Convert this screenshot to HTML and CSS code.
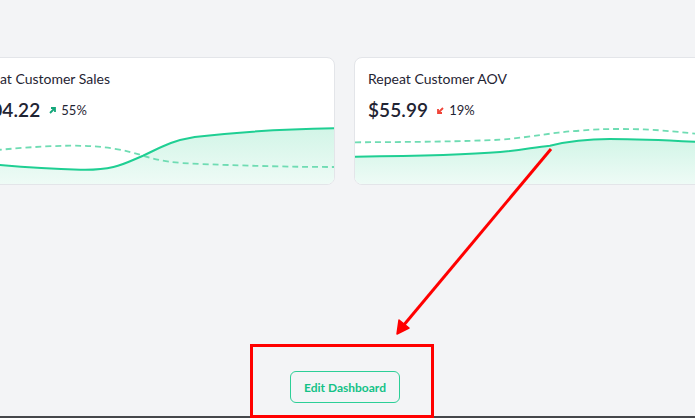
FILE: index.html
```html
<!DOCTYPE html>
<html>
<head>
<meta charset="utf-8">
<link rel="stylesheet" href="styles.css">
</head>
<body>
<div class="page">
  <div class="cards">
    <div class="card">
      <div class="card-head">
        <div class="title">Repeat Customer Sales</div>
        <div class="metric">
          <span class="value">$104.22</span>
          <svg class="trend" width="7" height="7" viewBox="0 0 7 7"><path d="M1 6 L5.5 1.5 M2 1 H6 V5" stroke="#14a77a" stroke-width="1.8" fill="none"/></svg>
          <span class="pct">55%</span>
        </div>
      </div>
      <svg class="chart" viewBox="0 0 380 58" preserveAspectRatio="none">
        <defs>
          <linearGradient id="g1" x1="0" y1="0" x2="0" y2="1">
            <stop offset="0" stop-color="#d2f5e7"/>
            <stop offset="1" stop-color="#eefbf6"/>
          </linearGradient>
        </defs>
        <path d="M0 35 C30 37 60 42 125 43.7 C160 44.5 170 37 188 29.7 C205 22 215 15 240 11 C290 5 340 3 380 2.3 L380 58 L0 58 Z" fill="url(#g1)"/>
        <path d="M0 28 C40 24 80 20 115 19.7 C150 19.5 170 24 188 29.7 C205 35 220 37 245 38 C300 40 340 41 380 41" fill="none" stroke="#6fdcb3" stroke-width="1.8" stroke-dasharray="6 4"/>
        <path d="M0 35 C30 37 60 42 125 43.7 C160 44.5 170 37 188 29.7 C205 22 215 15 240 11 C290 5 340 3 380 2.3" fill="none" stroke="#1fcf93" stroke-width="2"/>
      </svg>
    </div>
    <div class="card">
      <div class="card-head">
        <div class="title">Repeat Customer AOV</div>
        <div class="metric">
          <span class="value">$55.99</span>
          <svg class="trend" width="7" height="7" viewBox="0 0 7 7"><path d="M6 1 L1.5 5.5 M1 2 V6 H5" stroke="#f04438" stroke-width="1.8" fill="none"/></svg>
          <span class="pct">19%</span>
        </div>
      </div>
      <svg class="chart" viewBox="0 0 380 58" preserveAspectRatio="none">
        <defs>
          <linearGradient id="g2" x1="0" y1="0" x2="0" y2="1">
            <stop offset="0" stop-color="#d2f5e7"/>
            <stop offset="1" stop-color="#eefbf6"/>
          </linearGradient>
        </defs>
        <path d="M0 30.7 C60 30 110 29 146 26 C170 24 180 21 196 19.7 C215 15 230 13 256 13 C300 13 330 15 380 18 L380 58 L0 58 Z" fill="url(#g2)"/>
        <path d="M0 16.3 C60 16 110 15.5 146 13.7 C180 11 200 6 226 4.7 C245 3 255 3 266 3 C300 3 320 5 380 12" fill="none" stroke="#6fdcb3" stroke-width="1.8" stroke-dasharray="6 4"/>
        <path d="M0 30.7 C60 30 110 29 146 26 C170 24 180 21 196 19.7 C215 15 230 13 256 13 C300 13 330 15 380 18" fill="none" stroke="#1fcf93" stroke-width="2"/>
      </svg>
    </div>
  </div>
  <div class="actions">
    <button class="edit-btn">Edit Dashboard</button>
  </div>
</div>
<div class="bottom-line"></div>

<svg class="annot-arrow" width="695" height="418" viewBox="0 0 695 418">
  <line x1="551" y1="149" x2="403" y2="326" stroke="#ff0000" stroke-width="3"/>
  <path d="M397 334 L399 320 L409 328 Z" fill="#ff0000" stroke="#ff0000" stroke-width="1.5" stroke-linejoin="round"/>
</svg>
<div class="annot-box"></div>
</body>
</html>
```
FILE: styles.css
```css
html, body {
  margin: 0;
  padding: 0;
  background: #f3f4f6;
  overflow: hidden;
}
body {
  width: 695px;
  height: 418px;
  position: relative;
  font-family: "Lato", "Inter", sans-serif;
  color: #1f2937;
}
.page {
  height: 416px;
  display: flex;
  flex-direction: column;
  padding-top: 57px;
  box-sizing: border-box;
}
.cards {
  display: flex;
  gap: 19px;
  margin-left: -45px;
}
.card {
  flex: none;
  width: 380px;
  height: 128px;
  box-sizing: border-box;
  background: #fff;
  border: 1px solid #e3e5e9;
  border-radius: 8px;
  overflow: hidden;
  display: flex;
  flex-direction: column;
}
.card-head {
  padding: 12px 13px 0;
  flex: 1;
}
.title {
  font-size: 14px;
  line-height: 17px;
  color: #1f2433;
}
.metric {
  display: flex;
  align-items: center;
  margin-top: 11px;
  height: 23px;
}
.value {
  font-size: 19px;
  font-weight: 600;
  color: #1f2433;
  letter-spacing: 0.1px;
}
.trend {
  margin-left: 9px;
  margin-top: 1px;
}
.pct {
  margin-left: 5px;
  font-size: 13px;
  color: #1f2433;
}
.chart {
  display: block;
  width: 100%;
  height: 58px;
  flex: none;
}
.actions {
  display: flex;
  justify-content: center;
  padding-right: 5px;
  margin-top: 186px;
}
.edit-btn {
  width: 110px;
  height: 32px;
  background: #fff0;
  border: 1px solid #2ccf97;
  border-radius: 6px;
  color: #14c287;
  font-family: "Lato", sans-serif;
  font-weight: 700;
  font-size: 12px;
  padding: 0;
  cursor: pointer;
}
.bottom-line {
  height: 2px;
  background: #45474b;
}
.annot-arrow {
  position: absolute;
  left: 0;
  top: 0;
  pointer-events: none;
}
.annot-box {
  position: absolute;
  left: 250px;
  top: 344px;
  width: 184px;
  height: 74px;
  box-sizing: border-box;
  border: 3px solid #ff0000;
}
```
